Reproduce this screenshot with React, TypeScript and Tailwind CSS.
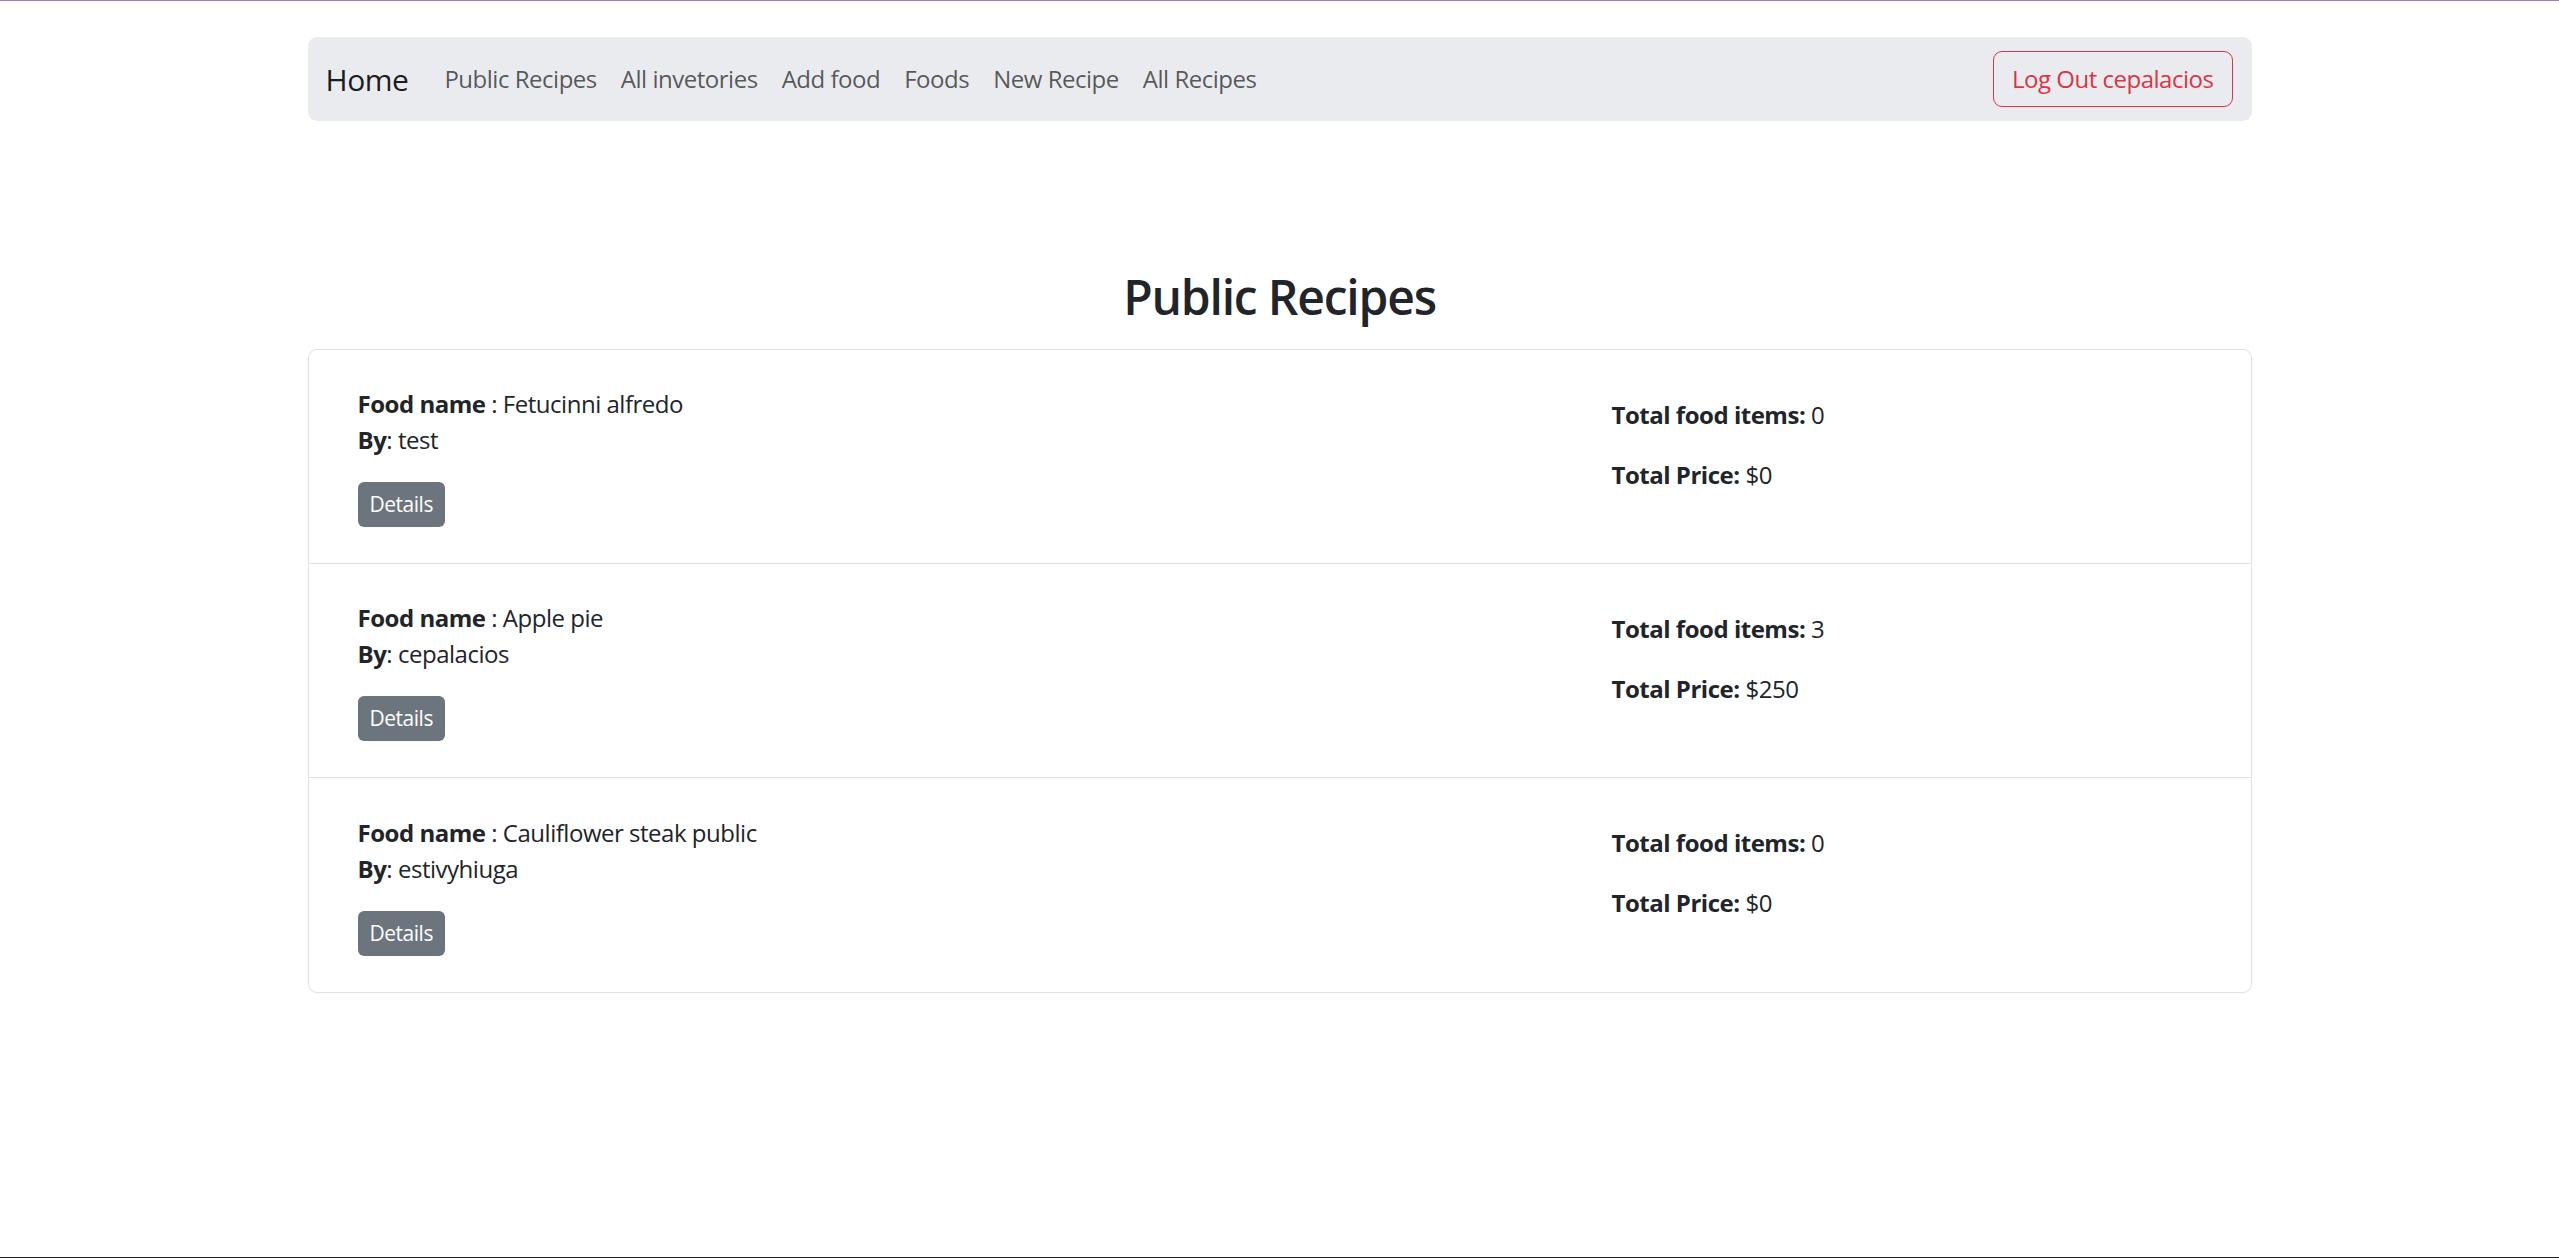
import React from "react";

const recipes = [
  { name: "Fetucinni alfredo", by: "test", items: 0, price: 0 },
  { name: "Apple pie", by: "cepalacios", items: 3, price: 250 },
  { name: "Cauliflower steak public", by: "estivyhiuga", items: 0, price: 0 },
];

const links = ["Public Recipes", "All invetories", "Add food", "Foods", "New Recipe", "All Recipes"];

export default function App() {
  return (
    <div className="h-[1258px] border-t border-b border-t-[#9b7cc0] border-b-[#222222] bg-white font-['Open_Sans',sans-serif] tracking-[-0.03em] text-[#212529]">
      <div className="mx-auto w-[1944px] pt-[36px]">
        <nav className="flex h-[84px] items-center rounded-[9px] bg-[#e9ebef] pl-[18px] pr-[19px]">
          <span className="mr-[24px] text-[30px] leading-[45px] text-black/90">Home</span>
          {links.map((l) => (
            <span key={l} className="px-[12px] text-[24px] leading-[36px] text-black/65">
              {l}
            </span>
          ))}
          <button className="ml-auto h-[56px] rounded-[9px] border border-[#dc3545] px-[18px] text-[24px] leading-[36px] text-[#dc3545]">
            Log Out cepalacios
          </button>
        </nav>

        <h2 className="mt-[147px] mb-[23px] text-center text-[48px] font-semibold leading-[1.2] tracking-[-0.025em] text-[#212529]">
          Public Recipes
        </h2>

        <div className="overflow-hidden rounded-[9px] border border-[#dee2e6]">
          {recipes.map((r, i) => (
            <div
              key={r.name}
              className={`flex h-[214px] items-center pl-[49px] ${i < recipes.length - 1 ? "border-b border-[#dee2e6]" : ""}`}
            >
              <div className="w-[1254px] pt-[1px]">
                <p className="text-[24px] leading-[36px]">
                  <b className="font-bold">Food name</b> : {r.name}
                </p>
                <p className="text-[24px] leading-[36px]">
                  <b className="font-bold">By</b>: {r.by}
                </p>
                <button className="mt-[24px] h-[45px] rounded-[6px] bg-[#6c757d] px-[12px] text-[21px] leading-[31px] text-white">
                  Details
                </button>
              </div>
              <div className="pt-[1px]">
                <p className="mb-[24px] text-[24px] leading-[36px]">
                  <b className="font-bold">Total food items:</b> {r.items}
                </p>
                <p className="mb-[24px] text-[24px] leading-[36px]">
                  <b className="font-bold">Total Price:</b> ${r.price}
                </p>
              </div>
            </div>
          ))}
        </div>
      </div>
    </div>
  );
}
